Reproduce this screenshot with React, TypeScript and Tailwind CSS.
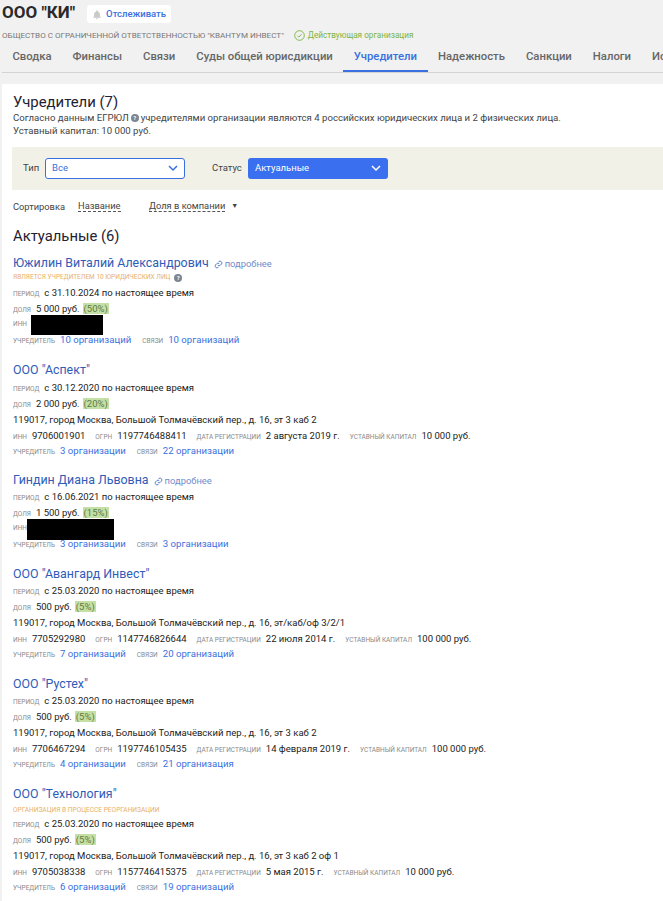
import React from "react";

const L = ({ children }: { children: React.ReactNode }) => (
  <span className="text-[6.5px] uppercase text-[#8a8a8a] mr-[5px]">{children}</span>
);
const V = ({ children, cls = "" }: { children: React.ReactNode; cls?: string }) => (
  <span className={`text-[#222] ${cls}`}>{children}</span>
);
const A = ({ children, cls = "" }: { children: React.ReactNode; cls?: string }) => (
  <span className={`text-[#3a6fe0] text-[9.6px] ${cls}`}>{children}</span>
);
const Row = ({ children, cls = "" }: { children: React.ReactNode; cls?: string }) => (
  <div className={`h-[16px] leading-[16px] whitespace-nowrap flex items-baseline ${cls}`}>{children}</div>
);
const Pct = ({ children }: { children: React.ReactNode }) => (
  <span className="bg-[#c5e0a5] text-[#5d7a45] ml-[3px] px-px leading-[11px]">{children}</span>
);
const Chain = () => (
  <svg width="9" height="9" viewBox="0 0 24 24" fill="none" stroke="#5b7fc7" strokeWidth="2.6" className="mr-[2px] self-center">
    <path d="M10 14a5 5 0 0 0 7 0l3-3a5 5 0 0 0-7-7l-1.5 1.5" />
    <path d="M14 10a5 5 0 0 0-7 0l-3 3a5 5 0 0 0 7 7l1.5-1.5" />
  </svg>
);
const Help = () => (
  <span className="inline-flex items-center justify-center w-[8px] h-[8px] rounded-full bg-[#7d8590] text-white text-[6px] leading-none font-bold self-center">?</span>
);

type Org = {
  note?: string; name?: string; period: string; money: string; pct: string; addr: string;
  inn: string; ogrn: string; date: string; cap: string; f: string; s: string;
};

const orgs: Org[] = [
  { name: 'ООО "Авангард Инвест"', period: "с 25.03.2020 по настоящее время", money: "500 руб.", pct: "(5%)", addr: "119017, город Москва, Большой Толмачёвский пер., д. 16, эт/каб/оф 3/2/1", inn: "7705292980", ogrn: "1147746826644", date: "22 июля 2014 г.", cap: "100 000 руб.", f: "7 организаций", s: "20 организаций" },
  { name: 'ООО "Рустех"', period: "с 25.03.2020 по настоящее время", money: "500 руб.", pct: "(5%)", addr: "119017, город Москва, Большой Толмачёвский пер., д. 16, эт 3 каб 2", inn: "7706467294", ogrn: "1197746105435", date: "14 февраля 2019 г.", cap: "100 000 руб.", f: "4 организации", s: "21 организация" },
  { name: 'ООО "Технология"', note: "Организация в процессе реорганизации", period: "с 25.03.2020 по настоящее время", money: "500 руб.", pct: "(5%)", addr: "119017, город Москва, Большой Толмачёвский пер., д. 16, эт 3 каб 2 оф 1", inn: "9705038338", ogrn: "1157746415375", date: "5 мая 2015 г.", cap: "10 000 руб.", f: "6 организаций", s: "19 организаций" },
];

const Name = ({ children, more, cls = "" }: { children: React.ReactNode; more?: boolean; cls?: string }) => (
  <div className={`h-[18px] leading-[18px] flex items-baseline whitespace-nowrap text-[12.4px] text-[#2f5cb8] ${cls}`}>
    {children}
    {more && (
      <span className="ml-[5px] flex items-baseline text-[9.4px] text-[#6f8cc9]"><Chain />подробнее</span>
    )}
  </div>
);

const OrgRows = ({ o }: { o: Org }) => (
  <>
    <Row><L>Период</L><V>{o.period}</V></Row>
    <Row><L>Доля</L><V>{o.money}</V><Pct>{o.pct}</Pct></Row>
    <Row><V>{o.addr}</V></Row>
    <Row>
      <L>ИНН</L><V cls="mr-[10px]">{o.inn}</V>
      <L>ОГРН</L><V cls="mr-[10px]">{o.ogrn}</V>
      <L>Дата регистрации</L><V cls="mr-[10px]">{o.date}</V>
      <L>Уставный капитал</L><V>{o.cap}</V>
    </Row>
    <Row cls="mt-[-1px]"><L>Учредитель</L><A cls="mr-[11px]">{o.f}</A><L>Связи</L><A>{o.s}</A></Row>
  </>
);

const Redacted = ({ box }: { box: string }) => (
  <div className="h-[16px] flex items-center whitespace-nowrap">
    <span className="text-[6.5px] uppercase text-[#8a8a8a] w-[14px]">ИНН</span>
    <div className={`bg-black ${box}`} />
  </div>
);

export default function App() {
  return (
    <div className="w-[663px] h-[901px] overflow-hidden bg-[#f1f1f1] text-[9.5px] font-['Roboto','Liberation_Sans',sans-serif] text-[#222]">
      <div className="h-[84px]">
        <div className="flex items-start h-[28px] pl-[2px]">
          <h1 className="text-[17px] font-bold text-[#2a2a2a] leading-[24px]">ООО "КИ"</h1>
          <div className="ml-[12px] mt-[5px] h-[18px] bg-white rounded-[3px] flex items-center px-[5px] text-[9.5px] font-medium text-[#3a6fe0]">
            <svg width="10" height="11" viewBox="0 0 24 24" fill="#c9c9c9" className="mr-[4px]">
              <path d="M12 2a2 2 0 0 0-2 2v.6A7 7 0 0 0 5 11v5l-2 3v1h18v-1l-2-3v-5a7 7 0 0 0-5-6.4V4a2 2 0 0 0-2-2zM9.5 21a2.5 2.5 0 0 0 5 0z" />
            </svg>
            Отслеживать
          </div>
        </div>
        <div className="h-[14px] pl-[2px] flex items-center text-[8.1px] text-[#777] whitespace-nowrap">
          <span className="uppercase">Общество с ограниченной ответственностью "Квантум Инвест"</span>
          <svg width="11" height="11" viewBox="0 0 24 24" fill="none" stroke="#7cb342" strokeWidth="2" className="ml-[10px] mr-[3px]">
            <circle cx="12" cy="12" r="10.5" />
            <path d="M7.5 12.5l3 3 6-6.5" />
          </svg>
          <span className="text-[#7cb342] text-[8.2px]">Действующая организация</span>
        </div>
        <div className="ml-[2px] h-[31px] border-b border-[#d3d3d3] flex text-[11.3px] font-medium leading-[14px] text-[#666] whitespace-nowrap overflow-hidden">
          {["Сводка", "Финансы", "Связи", "Суды общей юрисдикции"].map((t) => (
            <div key={t} className="px-[10.5px] pt-[8px]">{t}</div>
          ))}
          <div className="px-[10.5px] pt-[8px] text-[#3a6fe0] h-[30px] border-b-2 border-[#3a6fe0]">Учредители</div>
          {["Надежность", "Санкции", "Налоги", "Исполнительные"].map((t) => (
            <div key={t} className="px-[10.5px] pt-[8px]">{t}</div>
          ))}
        </div>
      </div>
      <div className="ml-[2px] bg-white h-[817px] pl-[11px] pt-[10px]">
        <h2 className="text-[14.9px] text-[#1f2233] leading-[17px]">Учредители (7)</h2>
        <div className="text-[9.6px] leading-[13px] text-[#444] whitespace-nowrap flex items-center gap-[2px]">
          Согласно данным ЕГРЮЛ <Help /> учредителями организации являются 4 российских юридических лица и 2 физических лица.
        </div>
        <div className="text-[9.6px] leading-[13px] text-[#444]">Уставный капитал: 10 000 руб.</div>

        <div className="mt-[10px] ml-[-1px] h-[43px] bg-[#f1f1e7] flex items-center pl-[11px] text-[9.5px] text-[#444]">
          <span className="w-[22px]">Тип</span>
          <div className="w-[140px] h-[21px] bg-white border border-[#3a6fe0] rounded-[3px] flex items-center justify-between px-[6px] text-[#3a6fe0]">
            Все
            <svg width="10" height="7" viewBox="0 0 10 7" fill="none" stroke="#3a6fe0" strokeWidth="1.5"><path d="M1 1l4 4 4-4" /></svg>
          </div>
          <span className="ml-[27px] w-[36px]">Статус</span>
          <div className="w-[140px] h-[21px] bg-[#3a6fef] rounded-[3px] flex items-center justify-between px-[7px] text-white">
            Актуальные
            <svg width="10" height="7" viewBox="0 0 10 7" fill="none" stroke="#fff" strokeWidth="1.5"><path d="M1 1l4 4 4-4" /></svg>
          </div>
        </div>

        <div className="mt-[9px] h-[15px] flex items-center text-[9.3px] text-[#444] whitespace-nowrap">
          <span className="w-[65px]">Сортировка</span>
          <span className="w-[43px] border-b border-dashed border-[#555] leading-[10px]">Название</span>
          <span className="ml-[28px] border-b border-dashed border-[#555] leading-[10px]">Доля в компании</span>
          <span className="ml-[6px] text-[7px]">▼</span>
        </div>

        <h2 className="mt-[12px] text-[14.8px] text-[#1f2233] leading-[20px]">Актуальные (6)</h2>

        <div className="mt-[8px]">
          <Name more>Южилин Виталий Александрович</Name>
          <div className="h-[12px] flex items-center gap-[4px] text-[6.5px] uppercase text-[#e8b06c] whitespace-nowrap">
            Является учредителем 10 юридических лиц <Help />
          </div>
          <Row cls="mt-px"><L>Период</L><V>с 31.10.2024 по настоящее время</V></Row>
          <Row><L>Доля</L><V>5 000 руб.</V><Pct>(50%)</Pct></Row>
          <Redacted box="ml-[4px] w-[72px] h-[20px]" />
          <Row cls="mt-[-1px]"><L>Учредитель</L><A cls="mr-[11px]">10 организаций</A><L>Связи</L><A>10 организаций</A></Row>
        </div>

        <div className="mt-[13px]">
          <Name cls="mb-px">ООО "Аспект"</Name>
          <OrgRows o={{ period: "с 30.12.2020 по настоящее время", money: "2 000 руб.", pct: "(20%)", addr: "119017, город Москва, Большой Толмачёвский пер., д. 16, эт 3 каб 2", inn: "9706001901", ogrn: "1197746488411", date: "2 августа 2019 г.", cap: "10 000 руб.", f: "3 организации", s: "22 организации" }} />
        </div>

        <div className="mt-[12px]">
          <Name more>Гиндин Диана Львовна</Name>
          <Row><L>Период</L><V>с 16.06.2021 по настоящее время</V></Row>
          <Row><L>Доля</L><V>1 500 руб.</V><Pct>(15%)</Pct></Row>
          <Redacted box="w-[87px] h-[21px]" />
          <Row cls="mt-[-1px]"><L>Учредитель</L><A cls="mr-[11px]">3 организации</A><L>Связи</L><A>3 организации</A></Row>
        </div>

        {orgs.map((o) => (
          <div key={o.inn} className="mt-[13px]">
            <Name>{o.name}</Name>
            {o.note && <div className="h-[12px] mt-[2px] mb-[-1px] flex items-center text-[6.6px] uppercase text-[#e8b06c] whitespace-nowrap">{o.note}</div>}
            <OrgRows o={o} />
          </div>
        ))}
      </div>
    </div>
  );
}
